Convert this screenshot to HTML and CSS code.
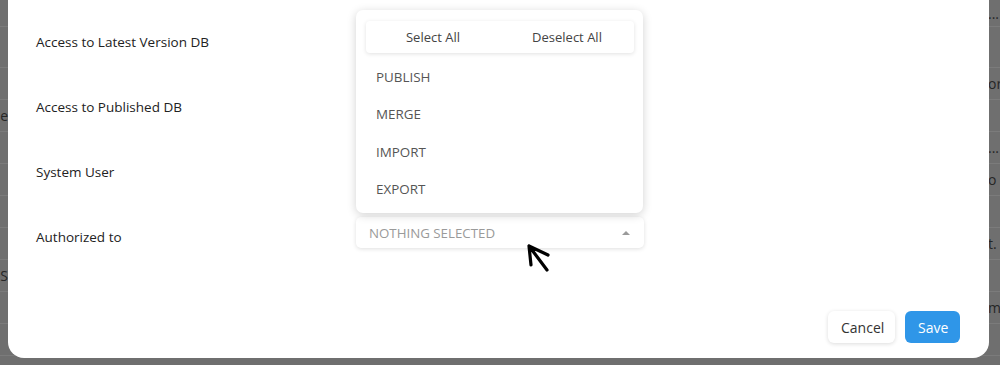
FILE: index.html
```html
<!DOCTYPE html>
<html>
<head>
<meta charset="utf-8">
<link rel="stylesheet" href="styles.css">
</head>
<body>
<div class="backdrop">
  <div class="bg-row head"><span class="l"></span><span class="r">...</span></div>
  <div class="bg-row tall"><span class="l"></span><span class="r"></span></div>
  <div class="bg-row"><span class="l"></span><span class="r">or</span></div>
  <div class="bg-row"><span class="l">e</span><span class="r"></span></div>
  <div class="bg-row"><span class="l"></span><span class="r">...</span></div>
  <div class="bg-row"><span class="l"></span><span class="r">o</span></div>
  <div class="bg-row"><span class="l"></span><span class="r"></span></div>
  <div class="bg-row"><span class="l"></span><span class="r">t.</span></div>
  <div class="bg-row"><span class="l">S</span><span class="r"></span></div>
  <div class="bg-row"><span class="l"></span><span class="r">m</span></div>
  <div class="bg-row"><span class="l"></span><span class="r"></span></div>
</div>

<div class="modal">
  <div class="form">
    <div class="label">Access to Latest Version DB</div>
    <div class="ctrl"></div>
    <div class="label">Access to Published DB</div>
    <div class="ctrl"></div>
    <div class="label">System User</div>
    <div class="ctrl"></div>
    <div class="label">Authorized to</div>
    <div class="ctrl">
      <div class="select">
        <span class="placeholder">NOTHING SELECTED</span>
        <span class="caret"></span>
        <div class="menu">
          <div class="actions">
            <span>Select All</span>
            <span>Deselect All</span>
          </div>
          <div class="item">PUBLISH</div>
          <div class="item">MERGE</div>
          <div class="item">IMPORT</div>
          <div class="item">EXPORT</div>
        </div>
        <svg class="cursor" width="26" height="32" viewBox="0 0 26 32">
          <path d="M3 3 L21 27 M3 3 L22 12 M3 3 L5 22" fill="none" stroke="#000" stroke-width="3.2" stroke-linecap="round" stroke-linejoin="round"/>
        </svg>
      </div>
    </div>
  </div>
  <div class="footer">
    <button class="btn cancel">Cancel</button>
    <button class="btn save">Save</button>
  </div>
</div>
</body>
</html>
```

FILE: styles.css
```css
* { box-sizing: border-box; }
html, body { margin: 0; padding: 0; }
body {
  width: 1000px;
  height: 365px;
  overflow: hidden;
  background: #6f6f6f;
  font-family: "Open Sans", "Noto Sans", sans-serif;
  position: relative;
}
.backdrop {
  display: flex;
  flex-direction: column;
}
.bg-row {
  height: 32px;
  border-bottom: 1px solid #7b7b7b;
  display: flex;
  justify-content: space-between;
  align-items: center;
  color: #262626;
  font-size: 14px;
}
.bg-row.head { height: 27px; }
.bg-row.tall { height: 41px; }
.bg-row .l { width: 8px; text-align: right; overflow: hidden; direction: rtl; }
.bg-row .r { width: 12px; overflow: hidden; white-space: nowrap; }

.modal {
  position: absolute;
  left: 8px;
  top: -20px;
  width: 981px;
  height: 378px;
  background: #fff;
  border-radius: 16px;
  display: flex;
  flex-direction: column;
  justify-content: space-between;
  padding: 29px 29px 15px 28px;
}
.form {
  display: grid;
  grid-template-columns: 320px 288px;
  grid-auto-rows: 65px;
  align-items: center;
}
.label {
  font-size: 13.5px;
  color: #222;
}
.ctrl { height: 100%; display: flex; align-items: center; }
.select {
  position: relative;
  width: 288px;
  height: 31px;
  margin-bottom: 8px;
  border-radius: 5px;
  background: #fff;
  box-shadow: 0 1px 4px rgba(0,0,0,0.13);
  display: flex;
  align-items: center;
  justify-content: space-between;
  padding: 0 14px 0 13px;
}
.placeholder {
  font-size: 13.3px;
  color: #9a9a9a;
}
.caret {
  width: 0; height: 0;
  border-left: 4px solid transparent;
  border-right: 4px solid transparent;
  border-bottom: 4px solid #9a9a9a;
}
.menu {
  position: absolute;
  left: 0;
  bottom: 35px;
  width: 287px;
  height: 203px;
  background: #fff;
  border-radius: 7px;
  box-shadow: 0 2px 10px rgba(0,0,0,0.18);
  padding: 11px 9px 5px 10px;
  display: flex;
  flex-direction: column;
}
.actions {
  height: 32px;
  flex: none;
  border-radius: 4px;
  box-shadow: 0 1px 4px rgba(0,0,0,0.12);
  display: grid;
  grid-template-columns: 1fr 1fr;
  align-items: center;
  text-align: center;
  font-size: 13px;
  color: #444;
  margin-bottom: 5px;
}
.item {
  height: 37.5px;
  flex: none;
  display: flex;
  align-items: center;
  padding-left: 10px;
  font-size: 13.4px;
  color: #555;
}
.cursor {
  position: absolute;
  left: 170px;
  top: 26px;
}
.footer {
  display: flex;
  justify-content: flex-end;
  gap: 10px;
}
.btn {
  height: 32px;
  border: none;
  border-radius: 6px;
  font-family: inherit;
  font-size: 14px;
  padding: 0 13px;
}
.cancel {
  background: #fff;
  color: #333;
  box-shadow: 0 1px 4px rgba(0,0,0,0.14);
  width: 67px;
}
.save {
  background: #2f96e8;
  color: #fff;
  width: 55px;
}
```
